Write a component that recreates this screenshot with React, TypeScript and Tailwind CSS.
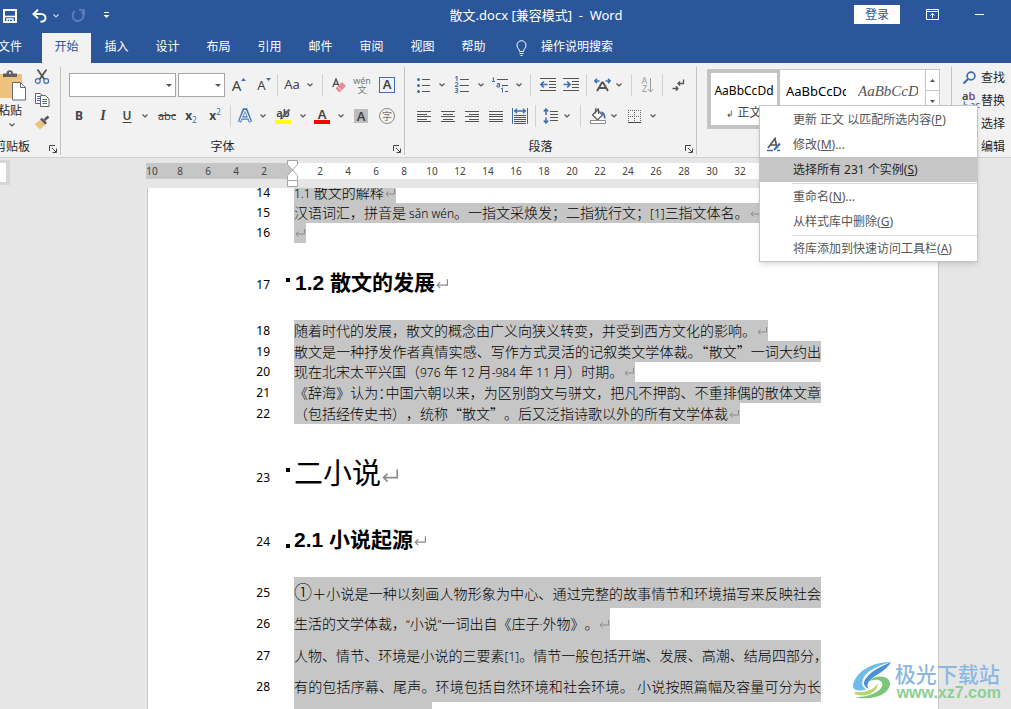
import React from 'react';
import clsx from 'clsx';

const UI_FONT = "font-['Noto_Sans','Noto_Sans_CJK_SC',sans-serif]";
const CJK_FONT = "font-['Noto_Sans_CJK_SC',sans-serif]";

const TABS = ['插入', '设计', '布局', '引用', '邮件', '审阅', '视图', '帮助'];
const RULER_LEFT = [10, 8, 6, 4, 2];
const RULER_RIGHT = [2, 4, 6, 8, 10, 12, 14, 16, 18, 20, 22, 24, 26, 28, 30, 32];

/* ---------- small shared pieces ---------- */

function Svg({ w = 16, h = 16, children, className }: { w?: number; h?: number; children: React.ReactNode; className?: string }) {
  return (
    <svg width={w} height={h} viewBox={`0 0 ${w} ${h}`} fill="none" className={clsx('shrink-0', className)} aria-hidden="true">
      {children}
    </svg>
  );
}

function Chevron({ color = '#555' }: { color?: string }) {
  return (
    <Svg w={6} h={4}>
      <path d="M0.5 0.5 L3 3 L5.5 0.5" stroke={color} strokeWidth="1.2" />
    </Svg>
  );
}

function Tool({ w, label, children }: { w: string; label: string; children: React.ReactNode }) {
  return (
    <button type="button" aria-label={label} className={clsx('flex h-6 shrink-0 items-center justify-center', w)}>
      {children}
    </button>
  );
}

function Divider({ w }: { w: string }) {
  return (
    <div className={clsx('flex shrink-0 justify-center', w)}>
      <div className="h-[22px] w-px bg-[#d2d2d2]" />
    </div>
  );
}

function Launcher({ label }: { label: string }) {
  return (
    <button type="button" aria-label={label} className="absolute right-[3px] bottom-0.5">
      <Svg w={8} h={8}>
        <path d="M0.5 6 V0.5 H6 M3 3 L7 7 M7.5 3.5 V7.5 H3.5" stroke="#444" />
      </Svg>
    </button>
  );
}

function Group({ label, className, children }: { label: string; className: string; children: React.ReactNode }) {
  return (
    <section className={clsx('relative flex shrink-0 flex-col border-r border-[#c3c3c3]', className)}>
      {children}
      <div className="mt-auto pr-5 text-center text-xs leading-4">{label}</div>
      <Launcher label={`${label}设置`} />
    </section>
  );
}

// Horizontal strokes used by the alignment and list icons
function Lines({ rows, color = '#555' }: { rows: number[][]; color?: string }) {
  return (
    <>
      {rows.map(([x, y, len]) => (
        <path key={`${x}-${y}`} d={`M${x} ${y}.5 h${len}`} stroke={color} />
      ))}
    </>
  );
}

/* ---------- title bar and tabs ---------- */

function TitleBar() {
  return (
    <header className="flex h-[33px] shrink-0 items-center pb-0.5 text-xs text-white">
      <div className="flex w-[236px] items-center pl-[3px]">
        <button type="button" aria-label="保存">
          <Svg w={14} h={14}>
            <path d="M1 1 H13 V13 H1 Z" stroke="#fff" strokeWidth="2" />
            <path d="M1 7.5 H13" stroke="#fff" strokeWidth="1.6" />
            <path d="M4 14 V10 H10 V14" stroke="#fff" strokeWidth="1.4" />
            <path d="M6.5 11 V14" stroke="#fff" />
          </Svg>
        </button>
        <button type="button" aria-label="撤消" className="ml-[15px]">
          <Svg w={15} h={14}>
            <path d="M1.5 5 H9 C12 5 13.5 7 13.5 9 C13.5 11.5 11.5 12.7 8.5 12.7" stroke="#fff" strokeWidth="2" />
            <path d="M6 0.8 L1.5 5 L6 9.2" stroke="#fff" strokeWidth="2" />
          </Svg>
        </button>
        <button type="button" aria-label="撤消列表" className="ml-1.5">
          <Chevron color="#c8d4ea" />
        </button>
        <button type="button" aria-label="重复" className="ml-3">
          <Svg w={14} h={14}>
            <path d="M4 2.2 A5.4 5.4 0 1 0 10.5 2.6" stroke="#5a7cb8" strokeWidth="2" />
            <path d="M8 0.8 H13 V6" stroke="#5a7cb8" strokeWidth="2" />
          </Svg>
        </button>
        <button type="button" aria-label="自定义快速访问工具栏" className="ml-[18px]">
          <Svg w={7} h={7}>
            <path d="M1 0.5 H6" stroke="#fff" />
            <path d="M0.5 3 H6.5 L3.5 6 Z" fill="#fff" />
          </Svg>
        </button>
      </div>
      <h1 className="flex-1 pr-[18px] text-center text-[13px] whitespace-pre">散文.docx [兼容模式]  -  Word</h1>
      <div className="flex w-[157px] items-center">
        <button type="button" className="mb-0.5 h-[19px] w-[46px] bg-white text-xs leading-[19px] text-[#2b579a]">登录</button>
        <button type="button" aria-label="功能区显示选项" className="mb-0.5 ml-[26px]">
          <Svg w={13} h={11}>
            <path d="M0.5 0.5 H12.5 V10.5 H0.5 Z M0.5 2.5 H12.5" stroke="#fff" />
            <path d="M6.5 9 V4.5 M4.3 6.5 L6.5 4.5 L8.7 6.5" stroke="#fff" />
          </Svg>
        </button>
        <button type="button" aria-label="最小化" className="mb-0.5 ml-9 h-3 w-[9px]">
          <span className="block h-px bg-white" />
        </button>
      </div>
    </header>
  );
}

function TabBar() {
  return (
    <nav className="-ml-4 flex h-[30px] shrink-0 items-stretch text-xs text-white">
      <button type="button" className="w-[58px] pr-1.5 pb-0.5">文件</button>
      <button type="button" className="w-[49px] bg-[#f2f2f2] pb-0.5 text-[#2b579a]">开始</button>
      {TABS.map((t) => (
        <button key={t} type="button" className="w-[51px] pb-0.5">{t}</button>
      ))}
      <button type="button" className="ml-[17px] flex items-center gap-3.5 pb-0.5">
        <Svg w={11} h={16} className="mt-0.5">
          <path d="M3.5 11.5 C3.5 9 1 8.3 1 5.2 A4.5 4.5 0 0 1 10 5.2 C10 8.3 7.5 9 7.5 11.5 Z" stroke="#fff" />
          <path d="M3.5 13.5 H7.5 M4.5 15.5 H6.5" stroke="#fff" />
        </Svg>
        操作说明搜索
      </button>
    </nav>
  );
}

/* ---------- ribbon ---------- */

function ClipboardGroup() {
  return (
    <section className="relative flex w-[61px] shrink-0 flex-col border-r border-[#c3c3c3]">
      <div className="flex">
        <button type="button" className="flex w-[30px] flex-col items-start pt-[3px] text-xs leading-4">
          <Svg w={27} h={31}>
            <rect x="-4" y="4" width="26" height="24" fill="#ecc27c" />
            <path d="M3 7 V3.5 H6.5 A3 3 0 0 1 13 3.5 H17 V7 Z" fill="#5f5f5f" />
            <circle cx="10" cy="3" r="1" fill="#f2f2f2" />
            <path d="M12.5 12.5 H20.5 L25.5 17.5 V30 H12.5 Z" fill="#fff" stroke="#6a6a6a" />
            <path d="M20.5 12.5 V17.5 H25.5" stroke="#6a6a6a" />
          </Svg>
          <span className="-ml-0.5 pt-0.5">粘贴</span>
          <span className="pt-1 pl-[9px]"><Chevron /></span>
        </button>
        <div className="flex flex-col gap-[7px] pt-0.5 pl-1">
          <button type="button" aria-label="剪切">
            <Svg w={16} h={16}>
              <path d="M3.5 0.5 L10.5 10.5 M12.5 0.5 L5.5 10.5" stroke="#555" strokeWidth="1.8" />
              <circle cx="3.8" cy="12" r="2.4" stroke="#3f6fb0" strokeWidth="1.2" />
              <circle cx="12.2" cy="12" r="2.4" stroke="#3f6fb0" strokeWidth="1.2" />
            </Svg>
          </button>
          <button type="button" aria-label="复制">
            <Svg w={16} h={16}>
              <path d="M1.5 1.5 H6.5 L8.5 3.5 V11.5 H1.5 Z" fill="#fff" stroke="#666" />
              <path d="M3 4.5 H6 M3 6.5 H6 M3 8.5 H6" stroke="#3f6fb0" />
              <path d="M6.5 3.5 H11.5 L15 7 V14.5 H6.5 Z" fill="#fff" stroke="#666" />
              <path d="M8.5 7.5 H13 M8.5 9.5 H13 M8.5 11.5 H13" stroke="#3f6fb0" />
            </Svg>
          </button>
          <button type="button" aria-label="格式刷">
            <Svg w={16} h={15}>
              <path d="M6 5 L11 10 L6 14.5 L0.5 9 Z" fill="#ecc27c" />
              <path d="M6 4.5 L8 2.8 L13 7.8 L11.2 9.8 Z" fill="#5a5a5a" />
              <path d="M10.5 5 L14.5 1.5" stroke="#5a5a5a" strokeWidth="2.6" />
            </Svg>
          </button>
        </div>
      </div>
      <div className="mt-auto -ml-1.5 text-xs leading-4">剪贴板</div>
      <Launcher label="剪贴板设置" />
    </section>
  );
}

function Combo({ label, w }: { label: string; w: string }) {
  return (
    <div className={clsx('relative h-6 shrink-0', w)}>
      <select aria-label={label} className="h-full w-full appearance-none border border-[#a6a6a6] bg-white" />
      <Svg w={6} h={3} className="pointer-events-none absolute top-[11px] right-1">
        <path d="M0 0 H6 L3 3 Z" fill="#555" />
      </Svg>
    </div>
  );
}

function FontGroup() {
  return (
    <Group label="字体" className="w-[344px]">
      <div className="flex h-9 items-center pl-2 text-[#444]">
        <Combo label="字体" w="w-[107px]" />
        <div className="w-0.5 shrink-0" />
        <Combo label="字号" w="w-[47px]" />
        <Tool w="w-7" label="增大字号">
          <span className="text-[15px]">A</span>
          <Svg w={5} h={3} className="mb-3"><path d="M0 3 L2.5 0 L5 3 Z" fill="#3f6fb0" /></Svg>
        </Tool>
        <Tool w="w-[22px]" label="减小字号">
          <span className="pt-0.5 text-[13px]">A</span>
          <Svg w={5} h={3} className="mb-3"><path d="M0 0 L2.5 3 L5 0 Z" fill="#3f6fb0" /></Svg>
        </Tool>
        <Divider w="w-1" />
        <Tool w="w-[26px]" label="更改大小写"><span className="text-[13px]">Aa</span></Tool>
        <Tool w="w-2.5" label="更改大小写选项"><Chevron /></Tool>
        <Divider w="w-3.5" />
        <Tool w="w-5" label="清除所有格式">
          <Svg w={15} h={15}>
            <path d="M0.8 9 L4 1 L7 8 M2 6.3 H6" stroke="#555" strokeWidth="1.4" />
            <path d="M3.5 10.5 L10 4 L14 8 L7.5 14.5 Z" fill="#e8899a" />
            <path d="M5.5 8.5 L9.5 12.5" stroke="#f6d5da" />
          </Svg>
        </Tool>
        <Tool w="w-[26px]" label="拼音指南">
          <span className="flex flex-col items-center text-[#777]">
            <span className="text-[9px] leading-[9px]">wén</span>
            <span className="text-[9px] leading-[9px]">文</span>
          </span>
        </Tool>
        <Tool w="w-6" label="字符边框">
          <span className="flex h-4 w-4 items-center justify-center border border-[#3f6fb0] text-[13px] font-semibold">A</span>
        </Tool>
      </div>
      <div className="flex h-[26px] items-center pl-1.5 text-[13px] text-[#444]">
        <Tool w="w-6" label="加粗"><b className="text-xs">B</b></Tool>
        <Tool w="w-6" label="倾斜"><i className="font-['Liberation_Serif',serif] text-sm font-bold">I</i></Tool>
        <Tool w="w-6" label="下划线"><span className="text-xs font-semibold underline underline-offset-2">U</span></Tool>
        <Tool w="w-3" label="下划线选项"><Chevron /></Tool>
        <Tool w="w-7" label="删除线"><span className="pl-1 text-[11px] line-through">abc</span></Tool>
        <Tool w="w-6" label="下标">
          <b className="text-xs">x</b><span className="pt-2 text-[8px] text-[#3f6fb0]">2</span>
        </Tool>
        <Tool w="w-6" label="上标">
          <b className="text-xs">x</b><span className="pb-2 text-[8px] text-[#3f6fb0]">2</span>
        </Tool>
        <Divider w="w-1.5" />
        <Tool w="w-6" label="文本效果">
          <Svg w={16} h={16}>
            <path d="M2.5 14 L7 2 H9 L13.5 14 M4.5 10 H11.5" stroke="#9fc0e6" strokeWidth="4" />
            <path d="M2.5 14 L7 2 H9 L13.5 14 M4.5 10 H11.5" stroke="#3f6fb0" strokeWidth="2.8" />
            <path d="M2.7 13.5 L7.4 2.5 H8.6 L13.3 13.5 M4.8 10 H11.2" stroke="#fff" strokeWidth="1.1" />
          </Svg>
        </Tool>
        <Tool w="w-3" label="文本效果选项"><Chevron /></Tool>
        <Tool w="w-7" label="突出显示">
          <span className="relative flex h-4 w-4 flex-col">
            <span className="text-[11px] leading-[9px] font-semibold">ab</span>
            <Svg w={16} h={16} className="absolute top-0 left-0">
              <path d="M14.5 1.5 L7.5 9" stroke="#666" strokeWidth="2.4" />
              <path d="M5 11.5 L6 8.5 L8.5 10.5 Z" fill="#444" />
              <path d="M0 12 H16 V16 H0 Z" fill="#ffff00" />
            </Svg>
          </span>
        </Tool>
        <Tool w="w-3" label="突出显示选项"><Chevron /></Tool>
        <Tool w="w-[26px]" label="字体颜色">
          <span className="flex flex-col items-center">
            <span className="text-[13px] leading-3 font-semibold">A</span>
            <span className="h-1 w-4 bg-[#ff0000]" />
          </span>
        </Tool>
        <Tool w="w-3" label="字体颜色选项"><Chevron /></Tool>
        <Tool w="w-7" label="字符底纹">
          <span className="h-3.5 w-3.5 bg-[#bdbdbd] text-center text-[13px] leading-3.5 font-semibold">A</span>
        </Tool>
        <Tool w="w-6" label="带圈字符">
          <span className="h-4 w-4 rounded-full border border-[#8a8a8a] text-center text-[10px] leading-[14px] text-[#777]">字</span>
        </Tool>
      </div>
    </Group>
  );
}

function ParagraphGroup() {
  return (
    <Group label="段落" className="w-[292px]">
      <div className="flex h-9 items-center pl-[5px] text-[#444]">
        <Tool w="w-7" label="项目符号">
          <Svg w={14} h={16}>
            <circle cx="1.5" cy="2.5" r="1.5" fill="#3f6fb0" />
            <circle cx="1.5" cy="8.5" r="1.5" fill="#3f6fb0" />
            <circle cx="1.5" cy="14.5" r="1.5" fill="#3f6fb0" />
            <Lines rows={[[5, 2, 8], [5, 8, 8], [5, 14, 8]]} />
          </Svg>
        </Tool>
        <Tool w="w-2" label="项目符号选项"><Chevron /></Tool>
        <Tool w="w-[31px]" label="编号">
          <span className="flex flex-col text-[7px] leading-[6px] font-bold text-[#3f6fb0]">
            <span>1</span><span>2</span><span>3</span>
          </span>
          <Svg w={10} h={16}><Lines rows={[[1, 2, 9], [1, 8, 9], [1, 14, 9]]} /></Svg>
        </Tool>
        <Tool w="w-2" label="编号选项"><Chevron /></Tool>
        <Tool w="w-[30px]" label="多级列表">
          <Svg w={17} h={16}>
            <path d="M0.5 1.5 L1.5 0.8 V4.5 M0 4.5 H3" stroke="#3f6fb0" />
            <path d="M5 6.5 H7.5 V10 H5 V8 H7.5" stroke="#3f6fb0" />
            <path d="M9 11.5 H10.5 V15.5 M10.5 9.5 V10.3" stroke="#3f6fb0" />
            <Lines rows={[[5, 2, 11], [10, 8, 6], [13, 14, 3]]} />
          </Svg>
        </Tool>
        <Tool w="w-2" label="多级列表选项"><Chevron /></Tool>
        <Divider w="w-3.5" />
        <Tool w="w-[22px]" label="减少缩进量">
          <Svg w={17} h={14}>
            <Lines rows={[[0, 0, 16], [9, 3, 7], [9, 6, 7], [9, 9, 7], [0, 12, 16]]} />
            <path d="M1 6.5 H7.5 M3.8 3.5 L1 6.5 L3.8 9.5" stroke="#3f6fb0" strokeWidth="1.7" />
          </Svg>
        </Tool>
        <Tool w="w-6" label="增加缩进量">
          <Svg w={17} h={14}>
            <Lines rows={[[0, 0, 16], [9, 3, 7], [9, 6, 7], [9, 9, 7], [0, 12, 16]]} />
            <path d="M0.5 6.5 H7 M4.2 3.5 L7 6.5 L4.2 9.5" stroke="#3f6fb0" strokeWidth="1.7" />
          </Svg>
        </Tool>
        <Divider w="w-1.5" />
        <Tool w="w-[26px]" label="中文版式">
          <Svg w={17} h={14}>
            <path d="M3 13 L8 4.5 H9 L14 13 M5 10 H12" stroke="#555" strokeWidth="1.9" />
            <path d="M5.5 3 H1 M3 0.8 L0.8 3 L3 5.2 M11.5 3 H16 M14 0.8 L16.2 3 L14 5.2" stroke="#3f6fb0" strokeWidth="1.5" />
          </Svg>
        </Tool>
        <Tool w="w-2" label="中文版式选项"><Chevron /></Tool>
        <Divider w="w-4" />
        <Tool w="w-[18px]" label="排序">
          <span className="flex flex-col text-[9px] leading-2 text-[#9a9a9a]"><span>A</span><span>Z</span></span>
          <Svg w={7} h={15}>
            <path d="M3.5 0 V14 M0.8 11 L3.5 14 L6.2 11" stroke="#9a9a9a" />
          </Svg>
        </Tool>
        <Divider w="w-2.5" />
        <Tool w="w-[22px]" label="显示编辑标记">
          <Svg w={13} h={13}>
            <path d="M11.5 0.5 V4.5 H6 M8 2.5 L6 4.5 L8 6.5" stroke="#555" strokeWidth="1.3" />
            <path d="M0.5 9.5 H6 M3.8 7.3 L6 9.5 L3.8 11.7" stroke="#555" strokeWidth="1.3" />
          </Svg>
        </Tool>
      </div>
      <div className="flex h-[26px] items-center pl-[7px]">
        <Tool w="w-6" label="左对齐">
          <Svg w={14} h={13}><Lines rows={[[0, 1, 14], [0, 4, 10], [0, 6, 14], [0, 9, 10], [0, 11, 14]]} /></Svg>
        </Tool>
        <Tool w="w-6" label="居中">
          <Svg w={14} h={13}><Lines rows={[[0, 1, 14], [2, 4, 10], [0, 6, 14], [2, 9, 10], [0, 11, 14]]} /></Svg>
        </Tool>
        <Tool w="w-6" label="右对齐">
          <Svg w={14} h={13}><Lines rows={[[0, 1, 14], [4, 4, 10], [0, 6, 14], [4, 9, 10], [0, 11, 14]]} /></Svg>
        </Tool>
        <Tool w="w-6" label="两端对齐">
          <Svg w={14} h={13}><Lines rows={[[0, 1, 14], [0, 4, 14], [0, 6, 14], [0, 9, 14], [0, 11, 14]]} /></Svg>
        </Tool>
        <Tool w="w-6" label="分散对齐">
          <Svg w={16} h={16}>
            <path d="M0.5 0 V16 M15.5 0 V16" stroke="#3f6fb0" />
            <path d="M2.5 3 H13.5 M5 0.8 L2.7 3 L5 5.2 M11 0.8 L13.3 3 L11 5.2" stroke="#3f6fb0" strokeWidth="1.4" />
            <Lines rows={[[2, 7, 12], [2, 9, 12], [2, 11, 12], [2, 13, 12], [2, 15, 12]]} />
          </Svg>
        </Tool>
        <Divider w="w-1.5" />
        <Tool w="w-6" label="行和段落间距">
          <Svg w={15} h={16}>
            <path d="M3 1.5 V7 M0.8 3.5 L3 1 L5.2 3.5 M3 9.5 V15 M0.8 12.5 L3 15 L5.2 12.5" stroke="#3f6fb0" strokeWidth="1.5" />
            <Lines rows={[[7, 3, 8], [7, 6, 8], [7, 9, 8], [7, 12, 8]]} />
          </Svg>
        </Tool>
        <Tool w="w-2.5" label="行距选项"><Chevron /></Tool>
        <Divider w="w-4" />
        <Tool w="w-5" label="底纹">
          <Svg w={17} h={16}>
            <path d="M2.5 7 L7.5 2 L12.5 7 L7.5 12 Z" fill="#fff" stroke="#555" strokeWidth="1.2" />
            <path d="M5.5 5.5 V1 H8.5 V6" stroke="#555" strokeWidth="1.2" />
            <path d="M10.5 3.5 C14 3.5 15.8 6 15.5 11 C14 10.5 13.5 9 13.3 7 Z" fill="#3f6fb0" />
            <path d="M0.5 12.5 H15.5 V15.5 H0.5 Z" fill="#fff" stroke="#8a8a8a" />
          </Svg>
        </Tool>
        <Tool w="w-3" label="底纹选项"><Chevron /></Tool>
        <Tool w="w-7" label="边框">
          <Svg w={13} h={13}>
            <path d="M0 0.5 H13 M0 6.5 H13 M0.5 0 V12 M6.5 0 V12 M12.5 0 V12" stroke="#666" strokeDasharray="1 1" />
            <path d="M0 12.5 H13" stroke="#444" />
          </Svg>
        </Tool>
        <Tool w="w-2.5" label="边框选项"><Chevron /></Tool>
      </div>
    </Group>
  );
}

function StyleGallery() {
  return (
    <div className="flex w-[255px] shrink-0 border-r border-[#c3c3c3] pl-2.5">
      <div className="mt-0.5 flex h-[60px] w-[233px] border border-[#c6c6c6] bg-white text-black">
        <button type="button" className="w-[72px] shrink-0 border-[3px] border-[#c3c3c3] bg-white">
          <span className="block pt-0.5 text-xs leading-8">AaBbCcDd</span>
          <span className="block pb-1.5 text-xs leading-3 text-[#444]"><span className="text-[9px]">↲</span> 正文</span>
        </button>
        <button type="button" className="ml-1.5 flex w-[60px] shrink-0 items-start overflow-hidden pt-[5px] text-[13px] leading-8">
          AaBbCcDd
        </button>
        <button
          type="button"
          className="ml-3 flex w-[60px] shrink-0 items-start overflow-hidden pt-[5px] font-['Liberation_Serif',serif] text-[15px] leading-8 text-[#555] italic"
        >
          AaBbCcDd
        </button>
        <div className="ml-auto flex w-3.5 flex-col border-l border-[#c6c6c6]">
          <button type="button" aria-label="上一行" className="flex h-[21px] items-center justify-center border-b border-[#c6c6c6]">
            <Svg w={5} h={3}><path d="M0 3 H5 L2.5 0 Z" fill="#555" /></Svg>
          </button>
          <button type="button" aria-label="下一行" className="flex h-[21px] items-center justify-center">
            <Svg w={5} h={3}><path d="M0 0 H5 L2.5 3 Z" fill="#555" /></Svg>
          </button>
        </div>
      </div>
    </div>
  );
}

function EditingGroup() {
  return (
    <section className="flex min-w-0 flex-1 flex-col overflow-hidden pl-2.5 text-xs whitespace-nowrap">
      <button type="button" className="flex h-[22px] shrink-0 items-center">
        <span className="flex w-[19px]">
          <Svg w={15} h={14}>
            <circle cx="9" cy="5" r="3.9" stroke="#3f6fb0" strokeWidth="1.7" />
            <path d="M6 8 L1.5 12.5" stroke="#3f6fb0" strokeWidth="2.2" />
          </Svg>
        </span>
        查找
      </button>
      <button type="button" className="flex h-[23px] shrink-0 items-center">
        <span className="w-[19px] text-left text-[11px] leading-2 font-semibold text-[#444]">
          a<span className="text-[#7a4a9a]">b</span><br />
          <span className="text-[9px] text-[#3f6fb0]">↳ac</span>
        </span>
        替换
      </button>
      <button type="button" className="flex h-[23px] shrink-0 items-center gap-1.5 pl-[19px]">选择 <Chevron /></button>
      <div className="flex h-[23px] shrink-0 items-center pl-[19px]">编辑</div>
    </section>
  );
}

/* ---------- ruler ---------- */

function RulerNumber({ n }: { n: number }) {
  return <span className="w-7 shrink-0 text-center">{n}</span>;
}

function Ruler() {
  return (
    <div className="flex h-[30px] shrink-0 items-start text-[10px] leading-4 text-[#444]">
      <div className="mt-0.5 h-[25px] w-2.5 border-y-3 border-r-4 border-[#d6d6d6] bg-white" />
      <div className="mt-[5px] ml-[136px] flex h-4 w-[147px] overflow-hidden bg-[#c6c6c6]">
        <div className="-ml-2 flex">{RULER_LEFT.map((n) => <RulerNumber key={n} n={n} />)}</div>
      </div>
      <div className="relative mt-[5px] mr-[72px] h-4 flex-1 bg-white">
        <div className="flex h-4 overflow-hidden pl-[13px]">{RULER_RIGHT.map((n) => <RulerNumber key={n} n={n} />)}</div>
        <Svg w={11} h={28} className="absolute -top-[3px] -left-1.5">
          <path d="M0.5 0.5 H10.5 V4.5 L5.5 10 L0.5 4.5 Z" fill="#fff" stroke="#a6a6a6" />
          <path d="M0.5 20.5 V15.5 L5.5 10 L10.5 15.5 V20.5 Z" fill="#fff" stroke="#a6a6a6" />
          <path d="M0.5 20.5 H10.5 V26.5 H0.5 Z" fill="#fff" stroke="#a6a6a6" />
        </Svg>
      </div>
    </div>
  );
}

/* ---------- document ---------- */

function Mark({ size = 10 }: { size?: number }) {
  return (
    <svg width={size} height={size} viewBox="0 0 10 10" fill="none" stroke="#8a8a8a" className="mx-px inline-block align-baseline" aria-hidden="true">
      <path d="M9.5 1 V6 H1 M3.5 3.5 L1 6 L3.5 8.5" />
    </svg>
  );
}

// Latin runs are set smaller than the Chinese body text
function En({ children }: { children: React.ReactNode }) {
  return <span className="font-['Noto_Sans',sans-serif] text-xs">{children}</span>;
}

// Full-width punctuation set in half its advance
function Half({ children }: { children: React.ReactNode }) {
  return <span className="[font-feature-settings:'halt']">{children}</span>;
}

function Line({ no, h, full, children }: { no?: number; h: string; full?: boolean; children?: React.ReactNode }) {
  return (
    <div className={clsx('flex shrink-0 items-center pr-[117px]', h)}>
      <span className="w-[122px] shrink-0 text-right font-['Noto_Sans',sans-serif] text-xs">{no}</span>
      <p
        className={clsx(
          'ml-6 flex h-full items-center bg-[#c6c6c6] pb-0.5 text-sm font-light whitespace-nowrap',
          full && 'flex-1'
        )}
      >
        <span className={clsx('block', full && 'w-full [text-align-last:justify]')}>{children}</span>
      </p>
    </div>
  );
}

function Heading({ no, h, bullet, numberClass = 'pt-1.5', children }: { no: number; h: string; bullet: string; numberClass?: string; children: React.ReactNode }) {
  return (
    <div className={clsx('flex shrink-0 items-center', h)}>
      <span className={clsx("w-[122px] shrink-0 text-right font-['Noto_Sans',sans-serif] text-xs", numberClass)}>{no}</span>
      <span className={clsx('ml-4 h-1 w-1 shrink-0 bg-black', bullet)} />
      <div className="ml-1 whitespace-nowrap">{children}</div>
    </div>
  );
}

function DocumentPage() {
  return (
    <main
      className={clsx(
        'mr-[72px] ml-[147px] min-h-0 flex-1 overflow-hidden border-x border-[#c9c9c9] bg-white text-black [text-spacing-trim:space-all]',
        CJK_FONT
      )}
    >
      <div className="-mt-1.5 flex flex-col">
        <Line no={14} h="h-[21px]"><En>1.1 </En>散文的解释<Mark /></Line>
        <Line no={15} h="h-5">
          汉语词汇，拼音是<En> sǎn wén</En>。一指文采焕发；二指犹行文；<En>[1]</En>三指文体名。<Mark />
        </Line>
        <Line no={16} h="h-5"><Mark /></Line>

        <Heading no={17} h="h-[77px]" bullet="mb-1">
          <h3 className="pt-0.5 pl-px font-['Liberation_Sans','Noto_Sans_CJK_SC',sans-serif] text-[21px] font-bold">
            1.2 散文的发展<Mark size={12} />
          </h3>
        </Heading>

        <Line no={18} h="h-[21px]">随着时代的发展，散文的概念由广义向狭义转变，并受到西方文化的影响。<Mark /></Line>
        <Line no={19} h="h-[21px]" full>
          散文是一种抒发作者真情实感、写作方式灵活的记叙类文学体裁。<Half>“</Half>散文”一词大约出
        </Line>
        <Line no={20} h="h-5">
          现在北宋太平兴国（<En>976 </En>年<En> 12 </En>月<En>-984 </En>年<En> 11 </En>月）时期。<Mark />
        </Line>
        <Line no={21} h="h-[21px]" full>
          《辞海》认为<Half>：</Half>中国六朝以来，为区别韵文与骈文，把凡不押韵、不重排偶的散体文章
        </Line>
        <Line no={22} h="h-[21px]">
          （包括经传史书），统称“散文”。后又泛指诗歌以外的所有文学体裁<Mark />
        </Line>

        <Heading no={23} h="h-[96px]" bullet="mb-1" numberClass="pt-3">
          <h2 className="text-[29px] font-normal">二小说<Mark size={16} /></h2>
        </Heading>
        <Heading no={24} h="h-[39px]" bullet="mt-3" numberClass="pt-1">
          <h3 className="font-['Liberation_Sans','Noto_Sans_CJK_SC',sans-serif] text-[21px] font-bold">
            2.1 小说起源<Mark size={12} />
          </h3>
        </Heading>
        <div className="h-[18px] shrink-0" />

        <Line no={25} h="h-[31px]" full>
          <span className="text-lg leading-5">①</span>＋小说是一种以刻画人物形象为中心、通过完整的故事情节和环境描写来反映社会
        </Line>
        <Line no={26} h="h-8">
          生活的文学体裁，<En>“</En>小说<En>”</En>一词出自《庄子<En>·</En>外物》。<Mark />
        </Line>
        <Line no={27} h="h-[31px]" full>
          人物、情节、环境是小说的三要素<En>[1]</En>。情节一般包括开端、发展、高潮、结局四部分<Half>，</Half>
        </Line>
        <Line no={28} h="h-[31px]" full>
          有的包括序幕、尾声。环境包括自然环境和社会环境。 小说按照篇幅及容量可分为长
        </Line>
        <Line h="h-[31px]"><span className="block w-[138px]" /></Line>
      </div>
    </main>
  );
}

/* ---------- context menu over the gallery ---------- */

function MenuItem({ text, hotkey, tail = '', active, icon }: { text: string; hotkey: string; tail?: string; active?: boolean; icon?: React.ReactNode }) {
  return (
    <li>
      <button type="button" className={clsx('flex h-[25px] w-full items-center text-left', active ? 'bg-[#c6c6c6] text-[#262626]' : 'text-[#555]')}>
        <span className="flex w-[33px] shrink-0 justify-start pl-1.5">{icon}</span>
        {text}(<u>{hotkey}</u>){tail}
      </button>
    </li>
  );
}

function StyleMenu() {
  return (
    <ul className="absolute top-[105px] left-[759px] w-[219px] border border-[#c6c6c6] bg-white pt-px text-xs whitespace-nowrap shadow-md">
      <MenuItem text="更新 正文 以匹配所选内容" hotkey="P" />
      <MenuItem
        text="修改"
        hotkey="M"
        tail="..."
        icon={
          <Svg w={17} h={15}>
            <path d="M2 11 L9 1.5 L11 11 M4.5 8 H10.5" stroke="#555" strokeWidth="1.6" />
            <path d="M8 13 L14 6.5" stroke="#3f6fb0" strokeWidth="2.2" />
            <path d="M1 13.5 H7 M11 13.5 H14" stroke="#3f6fb0" strokeWidth="1.4" />
          </Svg>
        }
      />
      <MenuItem text="选择所有 231 个实例" hotkey="S" active />
      <li className="ml-8 h-0.5 border-b border-[#dcdcdc]" />
      <MenuItem text="重命名" hotkey="N" tail="..." />
      <MenuItem text="从样式库中删除" hotkey="G" />
      <li className="ml-8 h-0.5 border-b border-[#dcdcdc]" />
      <MenuItem text="将库添加到快速访问工具栏" hotkey="A" />
    </ul>
  );
}

function Watermark() {
  return (
    <div className={clsx('absolute right-2.5 bottom-2 flex items-center', CJK_FONT)}>
      <svg width="42" height="40" viewBox="0 0 42 42" aria-hidden="true">
        <path d="M1 26 C3 12 20 1 41 1 C27 5 13 11 11 21 C10 26 12 28 15 30 C7 32 1 31 1 26 Z" fill="#6fbcec" />
        <path d="M14 19 C20 10 30 6 41 1 C36 10 27 13 20 19 C16 23 15 27 18 29 C13 28 11 24 14 19 Z" fill="#4a90d6" />
        <path d="M17 22 C24 13 41 15 40 25 C38 36 20 42 4 38 C18 38 31 32 32 25 C32 19 23 18 17 22 Z" fill="#7cc67c" />
        <path d="M3 32 C12 34 23 31 27 23 C28 32 15 39 3 35 Z" fill="#b4d96a" />
      </svg>
      <div className="ml-0.5">
        <div className="text-[21px] leading-6 font-medium text-[#8bb8e2]">极光下载站</div>
        <a href="#" className="block pl-0.5 font-['Liberation_Sans',sans-serif] text-base leading-4 font-bold text-[#8ccf93]">www.xz7.com</a>
      </div>
    </div>
  );
}

export default function App() {
  return (
    <div className={clsx('relative flex h-screen flex-col overflow-hidden bg-[#e6e6e6] text-[#262626]', UI_FONT)} lang="zh-CN">
      <div className="shrink-0 bg-[#2b579a]">
        <TitleBar />
        <TabBar />
      </div>
      <div className="flex h-[95px] shrink-0 border-b border-[#d0d0d0] bg-[#f2f2f2] pt-1 pb-0.5">
        <ClipboardGroup />
        <FontGroup />
        <ParagraphGroup />
        <StyleGallery />
        <EditingGroup />
      </div>
      <Ruler />
      <DocumentPage />
      <StyleMenu />
      <Watermark />
    </div>
  );
}
